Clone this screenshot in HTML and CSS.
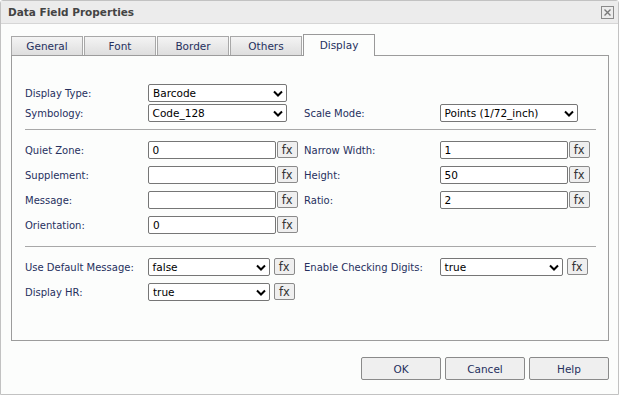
FILE: index.html
```html
<!DOCTYPE html>
<html lang="en">
<head>
    <meta charset="UTF-8">
    <title>Data Field Properties</title>
    <link rel="stylesheet" href="styles.css">
</head>
<body>
    <div class="dialog">
        <div class="titlebar">
            <span class="title">Data Field Properties</span>
            <span class="close">
                <svg width="13" height="13" viewBox="0 0 13 13">
                    <rect x="0.5" y="0.5" width="12" height="12" fill="none" stroke="#8a8a8a"/>
                    <path d="M3.5 3.5 L9.5 9.5 M9.5 3.5 L3.5 9.5" stroke="#7a7a7a" stroke-width="1.4"/>
                </svg>
            </span>
        </div>
        <div class="content">
            <div class="tabs">
                <div class="tab">General</div>
                <div class="tab">Font</div>
                <div class="tab">Border</div>
                <div class="tab">Others</div>
                <div class="tab active">Display</div>
            </div>
            <div class="panel">
                <!-- barcode type -->
                <div class="section first">
                    <div class="row tight">
                        <label class="lbl">Display Type:</label>
                        <div class="ctl">
                            <div class="select w139">Barcode <svg width="10" height="7" viewBox="0 0 10 7"><path d="M1 1.5 L5 5.5 L9 1.5" fill="none" stroke="#000" stroke-width="2"/></svg></div>
                        </div>
                    </div>
                    <div class="row tight">
                        <label class="lbl">Symbology:</label>
                        <div class="ctl">
                            <div class="select w139">Code_128 <svg width="10" height="7" viewBox="0 0 10 7"><path d="M1 1.5 L5 5.5 L9 1.5" fill="none" stroke="#000" stroke-width="2"/></svg></div>
                        </div>
                        <label class="lbl right">Scale Mode:</label>
                        <div class="ctl">
                            <div class="select w138">Points (1/72_inch) <svg width="10" height="7" viewBox="0 0 10 7"><path d="M1 1.5 L5 5.5 L9 1.5" fill="none" stroke="#000" stroke-width="2"/></svg></div>
                        </div>
                    </div>
                </div>
                <hr class="sep">
                <!-- sizes -->
                <div class="section">
                    <div class="row">
                        <label class="lbl">Quiet Zone:</label>
                        <div class="ctl"><div class="input">0</div><button class="fx">fx</button></div>
                        <label class="lbl right">Narrow Width:</label>
                        <div class="ctl"><div class="input">1</div><button class="fx">fx</button></div>
                    </div>
                    <div class="row">
                        <label class="lbl">Supplement:</label>
                        <div class="ctl"><div class="input"></div><button class="fx">fx</button></div>
                        <label class="lbl right">Height:</label>
                        <div class="ctl"><div class="input">50</div><button class="fx">fx</button></div>
                    </div>
                    <div class="row">
                        <label class="lbl">Message:</label>
                        <div class="ctl"><div class="input"></div><button class="fx">fx</button></div>
                        <label class="lbl right">Ratio:</label>
                        <div class="ctl"><div class="input">2</div><button class="fx">fx</button></div>
                    </div>
                    <div class="row">
                        <label class="lbl">Orientation:</label>
                        <div class="ctl"><div class="input">0</div><button class="fx">fx</button></div>
                    </div>
                </div>
                <hr class="sep">
                <!-- flags -->
                <div class="section">
                    <div class="row">
                        <label class="lbl">Use Default Message:</label>
                        <div class="ctl">
                            <div class="select w122">false <svg width="10" height="7" viewBox="0 0 10 7"><path d="M1 1.5 L5 5.5 L9 1.5" fill="none" stroke="#000" stroke-width="2"/></svg></div>
                            <button class="fx sm">fx</button>
                        </div>
                        <label class="lbl right">Enable Checking Digits:</label>
                        <div class="ctl">
                            <div class="select w123">true <svg width="10" height="7" viewBox="0 0 10 7"><path d="M1 1.5 L5 5.5 L9 1.5" fill="none" stroke="#000" stroke-width="2"/></svg></div>
                            <button class="fx sm">fx</button>
                        </div>
                    </div>
                    <div class="row">
                        <label class="lbl">Display HR:</label>
                        <div class="ctl">
                            <div class="select w122">true <svg width="10" height="7" viewBox="0 0 10 7"><path d="M1 1.5 L5 5.5 L9 1.5" fill="none" stroke="#000" stroke-width="2"/></svg></div>
                            <button class="fx sm">fx</button>
                        </div>
                    </div>
                </div>
            </div>
            <div class="footer">
                <button class="btn">OK</button>
                <button class="btn">Cancel</button>
                <button class="btn">Help</button>
            </div>
        </div>
    </div>
</body>
</html>
```

FILE: styles.css
```css
body, html {
    margin: 0;
    padding: 0;
    background-color: #fff;
    font-family: "DejaVu Sans", sans-serif;
    font-size: 10px;
    color: #26305e;
}
.dialog {
    width: 619px;
    height: 395px;
    box-sizing: border-box;
    border: 1px solid #c2c2c2;
    border-radius: 3px 3px 0 0;
    background-color: #fcfdfc;
    display: flex;
    flex-direction: column;
}
.titlebar {
    height: 23px;
    box-sizing: border-box;
    background-color: #ececec;
    border-bottom: 1px solid #d6d6d6;
    display: flex;
    align-items: center;
    justify-content: space-between;
    padding: 0 4px 0 7px;
}
.title {
    font-weight: bold;
    font-size: 10.5px;
    color: #444;
}
.close {
    display: flex;
    margin-top: 1px;
}
.content {
    padding: 11px 9px 0 10px;
}
.tabs {
    display: flex;
    gap: 1px;
    align-items: flex-end;
    height: 20px;
}
.tab {
    width: 72px;
    height: 19px;
    box-sizing: border-box;
    border: 1px solid #a8a8a8;
    border-bottom: none;
    background: linear-gradient(#f4f4f4, #dedede);
    text-align: center;
    line-height: 18px;
    font-size: 10.5px;
}
.tab.active {
    height: 22px;
    background: #fcfdfc;
    border-color: #999;
    line-height: 21px;
    position: relative;
    top: 1px;
}
.panel {
    height: 286px;
    box-sizing: border-box;
    border: 1px solid #9c9c9c;
    padding: 0 12px 0 13px;
}
.section.first {
    padding-top: 28px;
}
.section {
    padding-top: 11px;
}
.row {
    display: flex;
    height: 25px;
    align-items: flex-start;
}
.row.tight {
    height: 20px;
}
.lbl {
    width: 123px;
    line-height: 18px;
    padding-top: 1px;
    white-space: nowrap;
}
.lbl.right {
    width: 136px;
}
.ctl {
    width: 157px;
    display: flex;
    gap: 1px;
}
.select, .input {
    height: 18px;
    box-sizing: border-box;
    border: 1px solid #767676;
    border-radius: 2px;
    background-color: #fff;
    color: #000;
    font-size: 10.5px;
    padding: 0 3px 0 4px;
    line-height: 16px;
}
.select {
    display: flex;
    justify-content: space-between;
    align-items: center;
}
.w139 { width: 139px; }
.w138 { width: 138px; }
.w122 { width: 122px; }
.w123 { width: 123px; }
.input {
    width: 128px;
}
.fx {
    width: 21px;
    height: 17px;
    box-sizing: border-box;
    padding: 0;
    border: 1px solid #8a8a8a;
    border-radius: 2px;
    background-color: #efefef;
    font-family: "DejaVu Sans", sans-serif;
    font-size: 11.5px;
    color: #333;
    line-height: 14px;
}
.fx.sm {
    margin-left: 3px;
}
.sep {
    border: none;
    border-top: 1px solid #a8a8a8;
    margin: 6px 0 0 0;
}
.section + .sep {
    margin-top: 5px;
}
.footer {
    display: flex;
    justify-content: flex-end;
    gap: 4px;
    padding-top: 16px;
}
.btn {
    width: 80px;
    height: 23px;
    border: 1px solid #8a8a8a;
    border-radius: 2px;
    background-color: #efefef;
    font-family: "DejaVu Sans", sans-serif;
    font-size: 10.5px;
    color: #26305e;
}
```
